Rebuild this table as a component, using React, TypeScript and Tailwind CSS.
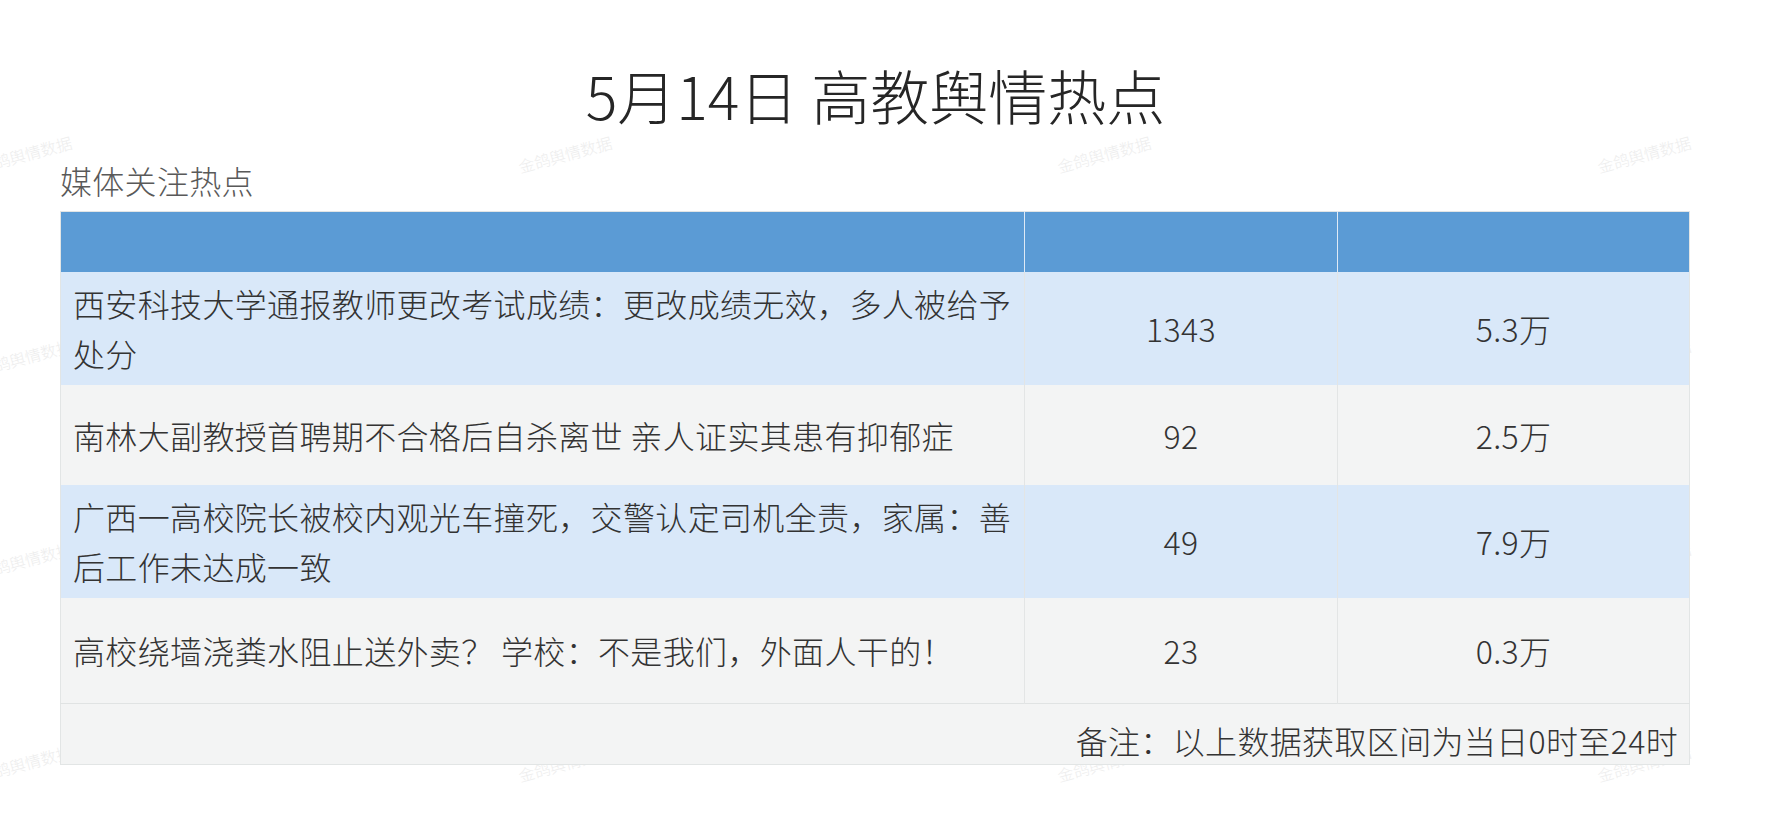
import React from "react";

const rows = [
  {
    t: "西安科技大学通报教师更改考试成绩：更改成绩无效，多人被给予处分",
    a: "1343",
    b: "5.3万",
    h: "h-[113px]",
    bg: "bg-[#d9e8f9]",
  },
  {
    t: "南林大副教授首聘期不合格后自杀离世 亲人证实其患有抑郁症",
    a: "92",
    b: "2.5万",
    h: "h-[100px]",
    bg: "bg-[#f3f4f4]",
  },
  {
    t: "广西一高校院长被校内观光车撞死，交警认定司机全责，家属：善后工作未达成一致",
    a: "49",
    b: "7.9万",
    h: "h-[113px]",
    bg: "bg-[#d9e8f9]",
  },
  {
    t: "高校绕墙浇粪水阻止送外卖？ 学校：不是我们，外面人干的！",
    a: "23",
    b: "0.3万",
    h: "h-[106px]",
    bg: "bg-[#f3f4f4]",
  },
];

const wmX = [25, 565, 1104, 1644];
const wmY = [154, 357, 560, 763];

export default function App() {
  return (
    <div
      className="relative w-full h-[814px] bg-white overflow-hidden text-[#333333] font-light"
      style={{ fontFamily: '"Noto Sans CJK SC", "Noto Sans", sans-serif' }}
    >
      {/* watermarks */}
      <div className="absolute inset-0 pointer-events-none">
        {wmY.map((y) =>
          wmX.map((x) => (
            <span
              key={`${x}-${y}`}
              className="absolute text-[16px] leading-none text-[#ededed] whitespace-nowrap -translate-x-1/2 -translate-y-1/2 -rotate-[15deg]"
              style={{ left: x, top: y }}
            >
              金鸽舆情数据
            </span>
          ))
        )}
      </div>

      <div className="relative pl-[60px] pt-[62px]">
        <h1 className="text-center text-[59px] leading-[66px] text-[#262626] font-light pr-[75px]">
          5月14日 高教舆情热点
        </h1>
        <div className="mt-[28px] text-[32px] leading-[48px] text-[#595959] tracking-[0.3px]">
          媒体关注热点
        </div>
        <table className="mt-[7px] w-[1629px] table-fixed border-collapse border border-[#e2e5e5] text-[32px] tracking-[0.35px]">
          <colgroup>
            <col className="w-[964px]" />
            <col className="w-[313px]" />
            <col className="w-[352px]" />
          </colgroup>
          <thead>
            <tr className="h-[60px] bg-[#5b9bd5]">
              <th className="border-r border-[#dfeaf6]"></th>
              <th className="border-r border-[#dfeaf6]"></th>
              <th></th>
            </tr>
          </thead>
          <tbody>
            {rows.map((r) => (
              <tr key={r.a} className={`${r.h} ${r.bg}`}>
                <td className="pl-[12px] pr-[10px] align-middle leading-[50px] border-r border-[#e3e5e5]">
                  {r.t}
                </td>
                <td className="text-center align-middle leading-[50px] border-r border-[#e3e5e5]">
                  {r.a}
                </td>
                <td className="text-center align-middle leading-[50px]">{r.b}</td>
              </tr>
            ))}
            <tr className="h-[61px] bg-[#f3f4f4]">
              <td
                colSpan={3}
                className="border-t border-[#e0e3e3] text-right pr-[11px] align-bottom leading-[48px]"
              >
                备注：以上数据获取区间为当日0时至24时
              </td>
            </tr>
          </tbody>
        </table>
      </div>
    </div>
  );
}
